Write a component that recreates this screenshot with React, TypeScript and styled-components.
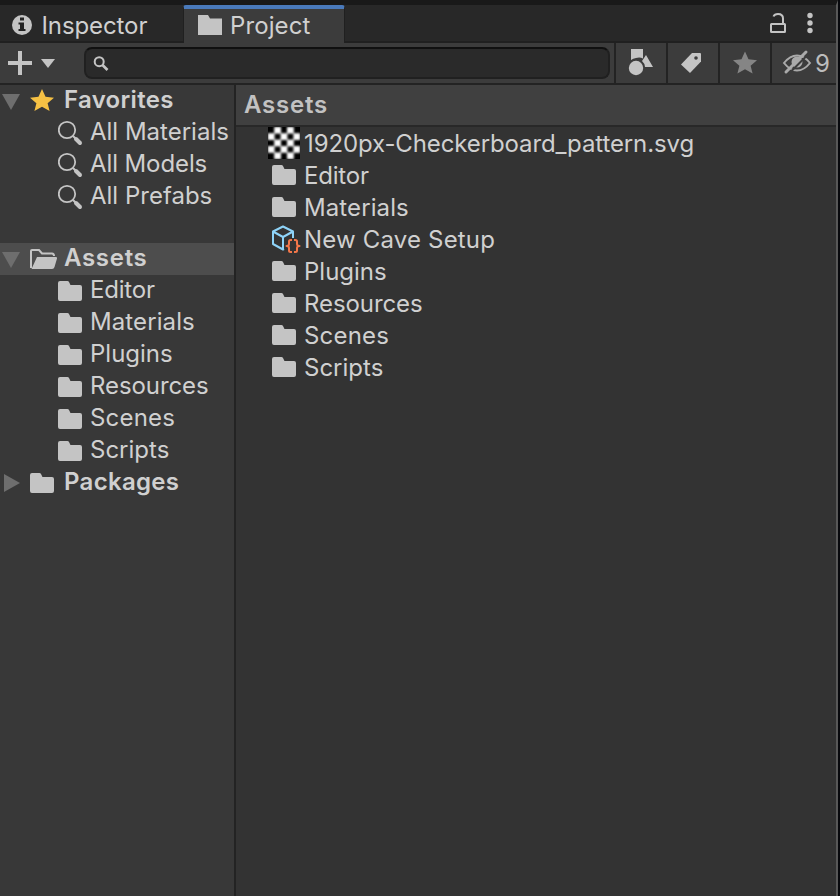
import React from "react";
import styled, { createGlobalStyle, css } from "styled-components";

const GlobalStyle = createGlobalStyle`
  *, *::before, *::after { box-sizing: border-box; }
  body { margin: 0; background: #0b0c10; overflow: hidden; }
`;

const LINE = "#232323";
const ICON = "#c4c4c4";

const Frame = styled.div`
  display: flex;
  width: 840px;
  height: 896px;
  background: #08090d;
  color: #d0d0d0;
  font-family: Inter, "Liberation Sans", sans-serif;
  font-size: 24px;
  white-space: nowrap;
`;

const Panel = styled.div`
  display: flex;
  flex-direction: column;
  width: 838px;
  border-top: 5px solid #191919;
  border-right: 2px solid #585858;
  background: #383838;
`;

const TabBar = styled.div`
  display: flex;
  height: 38px;
  background: #282828;
  box-shadow: inset 0 -2px 0 #202020;
`;

const Tab = styled.div<{ $active?: boolean }>`
  display: flex;
  align-items: flex-start;
  width: ${(p) => (p.$active ? 162 : 183)}px;
  padding-left: ${(p) => (p.$active ? 14 : 12)}px;
  ${(p) =>
    p.$active &&
    css`
      border-top: 4px solid #4a7abb;
      border-left: 1px solid #202020;
      border-right: 1px solid #202020;
      border-radius: 3px 3px 0 0;
      background: #3c3c3c;
    `}
`;

const TabLabel = styled.span<{ $top: number; $gap: number; $track: number }>`
  margin: ${(p) => p.$top}px 0 0 ${(p) => p.$gap}px;
  line-height: 28px;
  letter-spacing: ${(p) => p.$track}px;
`;

const TabActions = styled.div`
  display: flex;
  margin-left: auto;
  padding: 7px 22px 0 0;
  gap: 20px;
`;

const Toolbar = styled.div`
  display: flex;
  height: 42px;
  background: #3c3c3c;
  border-bottom: 2px solid ${LINE};
`;

const AddButton = styled.div`
  display: flex;
  width: 84px;
  padding: 8px 0 0 8px;
`;

const SearchField = styled.div`
  width: 526px;
  height: 32px;
  margin: 4px 4px 0 0;
  padding: 7px 0 0 7px;
  border: 2px solid #202020;
  border-top-color: #101010;
  border-radius: 8px;
  background: #2a2a2a;
`;

const ToolButton = styled.div<{ $wide?: boolean }>`
  display: flex;
  width: ${(p) => (p.$wide ? 66 : 52)}px;
  height: 40px;
  border-left: 2px solid ${LINE};
`;

const HiddenCount = styled.span`
  margin-left: 3px;
  line-height: 42px;
  color: #bdbdbd;
`;

const Body = styled.div`
  display: flex;
  flex: 1;
`;

const Sidebar = styled.div`
  width: 236px;
  border-right: 2px solid ${LINE};
  overflow: hidden;
`;

const TreeGroup = styled.div<{ $gap?: number }>`
  margin-bottom: ${(p) => p.$gap ?? 0}px;
`;

const TreeRow = styled.div<{ $selected?: boolean }>`
  display: flex;
  height: 32px;
  background: ${(p) => (p.$selected ? "#4d4d4d" : "transparent")};
`;

const Fold = styled.div`
  display: flex;
  width: 30px;
`;

const IconCell = styled.div<{ $indent?: number; $width: number }>`
  display: flex;
  flex: none;
  width: ${(p) => p.$width}px;
  margin-left: ${(p) => p.$indent ?? 0}px;
`;

const TreeLabel = styled.span<{ $bold?: boolean; $track?: number }>`
  line-height: 30px;
  font-weight: ${(p) => (p.$bold ? 600 : 400)};
  letter-spacing: ${(p) => p.$track ?? 0}px;
`;

const Content = styled.div`
  flex: 1;
  background: #333333;
`;

const Breadcrumb = styled.div`
  height: 42px;
  padding-left: 8px;
  border-bottom: 2px solid #282828;
  background: #404040;
  line-height: 40px;
  font-weight: 600;
  letter-spacing: 0.8px;
  color: #c2c2c2;
`;

const AssetRow = styled.div`
  display: flex;
  height: 32px;
`;

const AssetName = styled.span<{ $track?: number }>`
  line-height: 34px;
  letter-spacing: ${(p) => p.$track ?? 0}px;
`;

const Svg = styled.svg`
  display: block;
  flex: none;
`;

const Folder = () => (
  <Svg width="24" height="32">
    <path d="M2 6H9.500Q10.500 6 11 7L12.500 10H22Q24 10 24 12V24Q24 26 22 26H2Q0 26 0 24V8Q0 6 2 6Z" fill={ICON} />
  </Svg>
);

const TabFolder = () => (
  <Svg width="24" height="32">
    <path d="M0 6H10L12 9.500H24V26H0Z" fill={ICON} />
  </Svg>
);

const OpenFolder = () => (
  <Svg width="28" height="32">
    <path d="M1 25V8Q1 7 2 7H9L12 10.500H22Q24 10.500 24 13" fill="none" stroke={ICON} strokeWidth="2" />
    <path d="M7 14H26Q27.500 14 27 15.500L24.500 24Q24 26 22 26H1.500Z" fill={ICON} />
  </Svg>
);

const TreeSearch = () => (
  <Svg width="26" height="32" fill="none" stroke={ICON}>
    <circle cx="9" cy="13" r="8.200" strokeWidth="1.800" />
    <path d="M15 19L17.500 21.500" strokeWidth="2" />
    <path d="M18 22L22 26" strokeWidth="4" strokeLinecap="round" />
  </Svg>
);

const FoldArrow = ({ open }: { open?: boolean }) => (
  <Svg width="22" height="32">
    <path d={open ? "M2 9H20L11 25Z" : "M4 7V25L20 16Z"} fill="#6e6e6e" />
  </Svg>
);

const STAR = "M12 0L15.500 8.200L24 9L17.600 14.800L19.600 23L12 18.600L4.400 23L6.400 14.800L0 9L8.500 8.200Z";

const FavoriteStar = () => (
  <Svg width="24" height="32">
    <path transform="translate(0 4) scale(1 .96)" d={STAR} fill="#f6c144" />
  </Svg>
);

const InfoIcon = () => (
  <Svg width="20" height="32">
    <circle cx="10" cy="20" r="10" fill={ICON} />
    <path d="M8 12.500H12V15.500H8ZM6.500 17.500H12V24H13.500V26H6.500V24H8V19.500H6.500Z" fill="#222" />
  </Svg>
);

const Checkerboard = () => (
  <Svg width="32" height="32">
    <defs>
      <filter id="soften" x="0" y="0" width="1" height="1">
        <feGaussianBlur stdDeviation="0.8" />
      </filter>
      <clipPath id="thumb"><rect width="32" height="32" /></clipPath>
    </defs>
    <g clipPath="url(#thumb)">
      <rect width="32" height="32" fill="#000" />
      <g filter="url(#soften)">
        {[0, 1, 2, 3, 4].flatMap((row) =>
          [0, 1, 2, 3, 4]
            .filter((col) => (row + col) % 2 === 1)
            .map((col) => (
              <rect key={`${row}-${col}`} x={col * 6.4 - 0.2} y={row * 6.4 - 0.2} width="6.800" height="6.800" fill="#fff" />
            ))
        )}
      </g>
    </g>
  </Svg>
);

const PrefabIcon = () => (
  <Svg width="30" height="32" fill="none" strokeWidth="2" strokeLinejoin="round">
    <path d="M12 26L11 26.500L1 21V8.500L11 3.500L21 8.500V15M1 8.500L11 14L21 8.500M11 14V26.500" stroke="#8ed3f8" />
    <path d="M20 17H18.500Q17 17 17 18.500V21Q17 23 14.500 23Q17 23 17 25V27.500Q17 29 18.500 29H20M22 17H23.500Q25 17 25 18.500V21Q25 23 27.500 23Q25 23 25 25V27.500Q25 29 23.500 29H22" stroke="#f3774a" />
  </Svg>
);

const LockIcon = () => (
  <Svg width="16" height="24" fill="none" stroke={ICON} strokeWidth="2">
    <rect x="1" y="12" width="14" height="8" rx="0.500" />
    <path d="M3.500 4.500Q4.500 2 8 2Q13 2 13 6.500V12" />
  </Svg>
);

const MoreIcon = () => (
  <Svg width="8" height="24" fill={ICON}>
    <circle cx="4" cy="3.500" r="2.700" />
    <circle cx="4" cy="11" r="2.700" />
    <circle cx="4" cy="18.500" r="2.700" />
  </Svg>
);

const PlusIcon = () => (
  <Svg width="48" height="24" fill={ICON}>
    <path d="M10 0H14V10H24V14H14V24H10V14H0V10H10Z" />
    <path d="M33 8H47L40 17Z" />
  </Svg>
);

const FieldSearch = () => (
  <Svg width="16" height="16" fill="none" stroke={ICON} strokeWidth="2">
    <circle cx="6.200" cy="5.700" r="4.500" />
    <path d="M9.500 9L14.500 14" strokeWidth="2.600" />
  </Svg>
);

const ShapesIcon = () => (
  <Svg width="50" height="40" fill={ICON}>
    <path d="M15 6H27V15.500Q24 14 20 15Q17 15.500 15 17Z" />
    <circle cx="20" cy="25" r="7.200" />
    <path d="M30 12L37 24H29Q28.500 20 26 18Z" />
  </Svg>
);

const TagIcon = () => (
  <Svg width="50" height="40">
    <path d="M13 21.500L24 10H32Q33 10 33 11V18.500L22 30Z" fill={ICON} />
    <circle cx="28" cy="15" r="1.800" fill="#3c3c3c" />
  </Svg>
);

const ToolStar = () => (
  <Svg width="50" height="40">
    <path transform="translate(13 8.500) scale(1 .96)" d={STAR} fill="#858585" />
  </Svg>
);

const HiddenIcon = () => (
  <Svg width="40" height="40">
    <g fill="none" stroke="#aaa" strokeWidth="2">
      <path d="M12 20Q18 12.500 25 12.500Q32 12.500 38 20Q32 27.500 25 27.500Q18 27.500 12 20Z" />
      <circle cx="25" cy="19" r="5.500" fill="#aaa" stroke="none" />
      <path d="M16 31.500L36 11.500" stroke="#3c3c3c" strokeWidth="2" />
      <path d="M14 29L34 9" strokeWidth="3" strokeLinecap="round" />
    </g>
  </Svg>
);

type Entry = { name: string; kind?: "image" | "prefab"; track?: number };

const searches: Entry[] = [
  { name: "All Materials" },
  { name: "All Models", track: -0.1 },
  { name: "All Prefabs" },
];

const folders: Entry[] = [
  { name: "Editor", track: -0.2 },
  { name: "Materials", track: 0.1 },
  { name: "Plugins" },
  { name: "Resources", track: -0.08 },
  { name: "Scenes", track: 0.2 },
  { name: "Scripts" },
];

const assets: Entry[] = [
  { name: "1920px-Checkerboard_pattern.svg", kind: "image", track: -0.12 },
  ...folders.slice(0, 2),
  { name: "New Cave Setup", kind: "prefab", track: 0.18 },
  ...folders.slice(2),
];

type RootProps = {
  icon: React.ReactNode;
  label: string;
  track: number;
  open?: boolean;
  selected?: boolean;
};

const RootRow = ({ icon, label, track, open, selected }: RootProps) => (
  <TreeRow $selected={selected}>
    <Fold><FoldArrow open={open} /></Fold>
    <IconCell $width={34}>{icon}</IconCell>
    <TreeLabel $bold $track={track}>{label}</TreeLabel>
  </TreeRow>
);

const ChildRow = ({ icon, entry }: { icon: React.ReactNode; entry: Entry }) => (
  <TreeRow>
    <IconCell $indent={58} $width={32}>{icon}</IconCell>
    <TreeLabel $track={entry.track}>{entry.name}</TreeLabel>
  </TreeRow>
);

const AssetIcon = ({ kind }: { kind?: Entry["kind"] }) => {
  if (kind === "image") return <Checkerboard />;
  return kind === "prefab" ? <PrefabIcon /> : <Folder />;
};

export default function App() {
  return (
    <>
      <GlobalStyle />
      <Frame>
        <Panel>
          <TabBar>
            <Tab>
              <InfoIcon />
              <TabLabel $top={7} $gap={9.5} $track={-0.1}>Inspector</TabLabel>
            </Tab>
            <Tab $active>
              <TabFolder />
              <TabLabel $top={3} $gap={8} $track={0.1}>Project</TabLabel>
            </Tab>
            <TabActions>
              <LockIcon />
              <MoreIcon />
            </TabActions>
          </TabBar>
          <Toolbar>
            <AddButton><PlusIcon /></AddButton>
            <SearchField><FieldSearch /></SearchField>
            <ToolButton><ShapesIcon /></ToolButton>
            <ToolButton><TagIcon /></ToolButton>
            <ToolButton><ToolStar /></ToolButton>
            <ToolButton $wide>
              <HiddenIcon />
              <HiddenCount>9</HiddenCount>
            </ToolButton>
          </Toolbar>
          <Body>
            <Sidebar>
              <TreeGroup $gap={30}>
                <RootRow open icon={<FavoriteStar />} label="Favorites" track={0.3} />
                {searches.map((entry) => <ChildRow key={entry.name} icon={<TreeSearch />} entry={entry} />)}
              </TreeGroup>
              <TreeGroup>
                <RootRow open selected icon={<OpenFolder />} label="Assets" track={0.7} />
                {folders.map((entry) => <ChildRow key={entry.name} icon={<Folder />} entry={entry} />)}
              </TreeGroup>
              <RootRow icon={<Folder />} label="Packages" track={0.3} />
            </Sidebar>
            <Content>
              <Breadcrumb>Assets</Breadcrumb>
              {assets.map(({ name, kind, track }) => (
                <AssetRow key={name}>
                  <IconCell $indent={kind === "image" ? 32 : 36} $width={kind === "image" ? 36 : 32}>
                    <AssetIcon kind={kind} />
                  </IconCell>
                  <AssetName $track={track}>{name}</AssetName>
                </AssetRow>
              ))}
            </Content>
          </Body>
        </Panel>
      </Frame>
    </>
  );
}
